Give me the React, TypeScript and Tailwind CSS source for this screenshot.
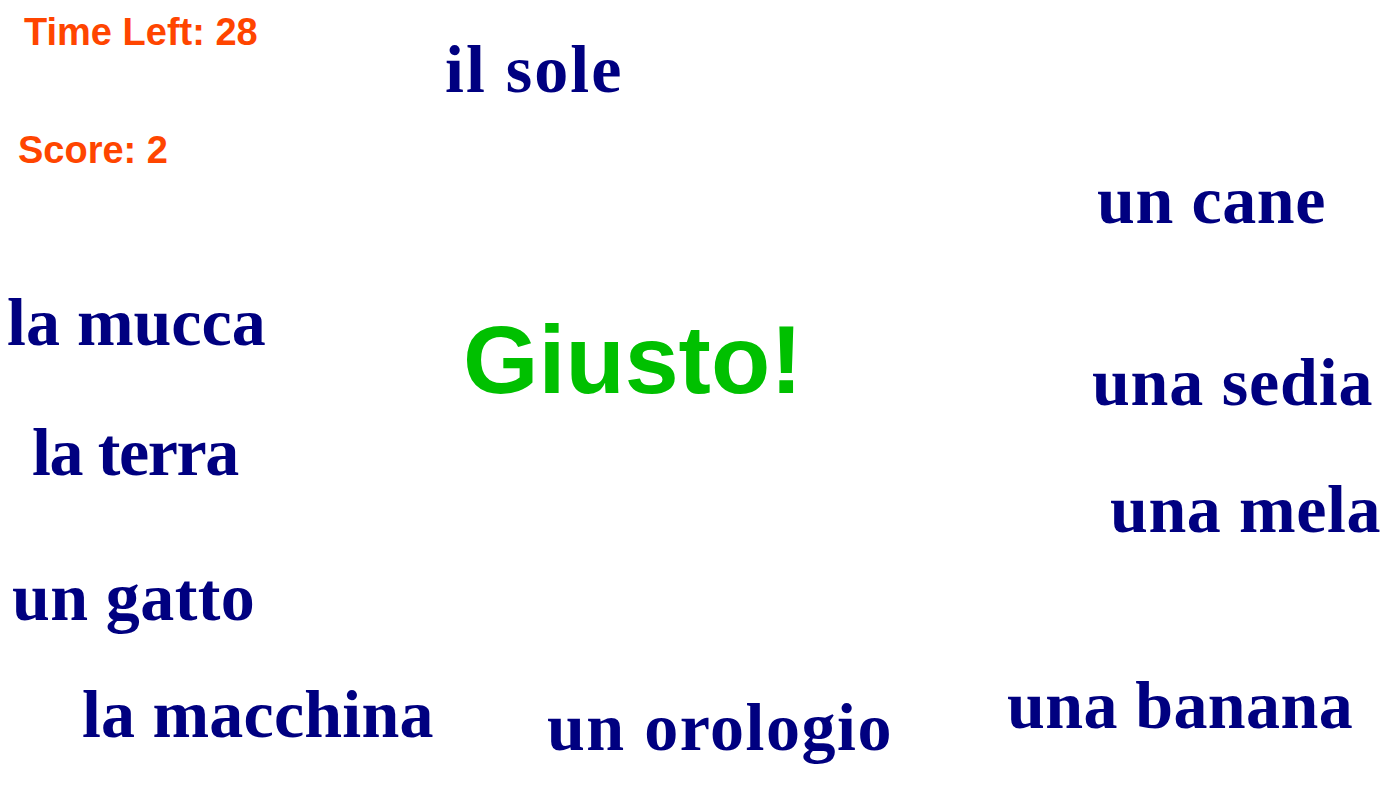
import React from 'react'

interface Word { text: string; x: number; y: number; tracking: string }

// parole sul tabellone (posizione = contenuto del gioco)
const words: Word[] = [
  { text: 'il sole', x: 445, y: 35, tracking: 'tracking-[2px]' },
  { text: 'un cane', x: 1097, y: 166, tracking: 'tracking-[0.6px]' },
  { text: 'la mucca', x: 7, y: 288, tracking: 'tracking-normal' },
  { text: 'una sedia', x: 1092, y: 348, tracking: 'tracking-[0.8px]' },
  { text: 'la terra', x: 32, y: 418, tracking: 'tracking-[-1.4px]' },
  { text: 'una mela', x: 1110, y: 475, tracking: 'tracking-[0.6px]' },
  { text: 'un gatto', x: 12, y: 563, tracking: 'tracking-[0.4px]' },
  { text: 'una banana', x: 1007, y: 671, tracking: 'tracking-[0.4px]' },
  { text: 'la macchina', x: 82, y: 680, tracking: 'tracking-[0.2px]' },
  { text: 'un orologio', x: 547, y: 693, tracking: 'tracking-[1.5px]' },
]

export default function App() {
  const timeLeft = 28
  const score = 2

  return (
    <div className="relative w-[1399px] h-[787px] overflow-hidden bg-white">
      <div className="absolute left-[24px] top-[13px] text-[38px] leading-none font-bold text-[#ff4500] font-['Liberation_Sans',Arial,sans-serif]">
        Time Left: {timeLeft}
      </div>
      <div className="absolute left-[18px] top-[131px] text-[38px] leading-none font-bold text-[#ff4500] font-['Liberation_Sans',Arial,sans-serif]">
        Score: {score}
      </div>

      <div className="absolute left-[463px] top-[311px] text-[97px] leading-none font-bold text-[#00c000] font-['Liberation_Sans',Arial,sans-serif]">
        Giusto!
      </div>

      {words.map(w => (
        <span
          key={w.text}
          className={`absolute whitespace-nowrap text-[68px] leading-none font-bold text-[#000080] font-['Liberation_Serif','Times_New_Roman',serif] cursor-pointer select-none ${w.tracking}`}
          style={{ left: w.x, top: w.y }}
        >
          {w.text}
        </span>
      ))}
    </div>
  )
}
